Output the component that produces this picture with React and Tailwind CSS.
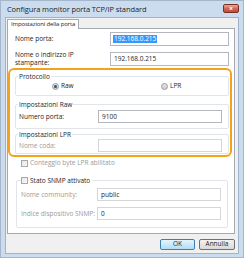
import React from "react";

function Field({ value, selected, muted, className = "" }) {
  return (
    <div
      className={`h-[13px] bg-white border flex items-center px-[2px] text-[6.5px] ${
        muted ? "border-[#d4d6da]" : "border-[#b4b7bd]"
      } ${className}`}
    >
      {value && (
        <span
          className={
            selected
              ? "bg-[#3399ff] text-white leading-[8px] px-[1px]"
              : "text-[#1e1e1e] leading-[8px] px-[1px]"
          }
        >
          {value}
        </span>
      )}
    </div>
  );
}

function Radio({ checked }) {
  return (
    <span className="w-[7px] h-[7px] rounded-full border border-[#9a9a9a] bg-gradient-to-b from-[#e4e4e4] to-[#cfcfcf] flex items-center justify-center">
      {checked && (
        <span className="w-[3px] h-[3px] rounded-full bg-[#24527d]" />
      )}
    </span>
  );
}

function Check() {
  return (
    <span className="w-[7px] h-[7px] border border-[#a9a9a9] bg-gradient-to-br from-[#e6e6e6] to-[#fafafa]" />
  );
}

export default function App() {
  return (
    <div className="w-[244px] h-[258px] bg-[#cbdcee] flex flex-col font-['Open_Sans','Noto_Sans',sans-serif] text-[#1e1e1e] border border-[#a3b6cc]">
      {/* Title bar */}
      <div className="h-[16px] flex items-start justify-between pl-[6px] pr-[4px]">
        <span className="text-[7.5px] leading-[9px] mt-[4px] tracking-[-0.1px]">
          Configura monitor porta TCP/IP standard
        </span>
        <div className="mt-[3px] w-[16px] h-[9px] rounded-[2px] border border-[#7a2f25] bg-gradient-to-b from-[#e9a89a] via-[#d26a55] to-[#c24a34] flex items-center justify-center text-white text-[7px] leading-none font-bold">
          ×
        </div>
      </div>

      {/* Client area */}
      <div className="flex-1 mx-[4px] mb-[3px] bg-[#f0f0f0] border border-[#9fb4cc] flex flex-col">
        {/* Tab */}
        <div className="self-start mt-[1px] ml-[1px] h-[10px] bg-white border border-b-0 border-[#a5a9b0] -mb-[1px] relative z-10 flex items-center px-[3px] text-[6px] tracking-[-0.15px] whitespace-nowrap">
          Impostazioni della porta
        </div>

        {/* Panel */}
        <div className="ml-[1px] mr-[3px] h-[206px] bg-white border border-[#a5a9b0] flex flex-col text-[6.5px]">
          <div className="mt-[3px] h-[14px] flex items-center justify-between pl-[7px] pr-[5px]">
            <span>Nome porta:</span>
            <Field value="192.168.0.215" selected className="w-[119px] h-[14px]" />
          </div>
          <div className="mt-[5px] h-[16px] flex items-center justify-between pl-[7px] pr-[5px]">
            <span className="leading-[8px]">
              Nome o indirizzo IP
              <br />
              stampante:
            </span>
            <Field value="192.168.0.215" className="w-[119px] h-[14px]" />
          </div>

          {/* Highlighted block */}
          <div className="mt-[1px] mr-[2px] h-[89px] border-2 border-[#f2a31c] rounded-[6px] flex flex-col">
            <fieldset className="mt-[2px] ml-[5px] mr-[1px] border border-[#e1e4e8] rounded-[2px] pb-[4px]">
              <legend className="ml-[2px] px-[1px] leading-[9px]">Protocollo</legend>
              <div className="h-[10px] flex items-center">
                <div className="w-[145px] pl-[36px] flex items-center gap-[2px]">
                  <Radio checked />
                  <span>Raw</span>
                </div>
                <div className="flex items-center gap-[2px]">
                  <Radio />
                  <span>LPR</span>
                </div>
              </div>
            </fieldset>

            <fieldset className="mt-[4px] ml-[5px] mr-[1px] border border-[#e1e4e8] rounded-[2px] pb-[5px]">
              <legend className="ml-[2px] px-[1px] leading-[9px]">Impostazioni Raw</legend>
              <div className="mt-[1px] flex items-center justify-between pl-[3px] pr-[6px]">
                <span>Numero porta:</span>
                <Field value="9100" className="w-[124px]" />
              </div>
            </fieldset>

            <fieldset className="mt-[1px] ml-[5px] mr-[1px] border border-[#e1e4e8] rounded-[2px] pb-[1px]">
              <legend className="ml-[2px] px-[1px] leading-[9px]">Impostazioni LPR</legend>
              <div className="flex items-center justify-between pl-[3px] pr-[6px]">
                <span className="text-[#9a9a9a]">Nome coda:</span>
                <Field muted className="w-[124px]" />
              </div>
            </fieldset>
          </div>

          <div className="mt-[1px] h-[10px] flex items-center gap-[2px] pl-[13px] text-[#9a9a9a]">
            <Check />
            <span>Conteggio byte LPR abilitato</span>
          </div>

          <fieldset className="mt-[8px] ml-[8px] mr-[6px] border border-[#e1e4e8] rounded-[2px] pb-[7px]">
            <legend className="ml-[4px] pr-[2px] leading-[9px] flex items-center gap-[2px]">
              <Check />
              <span>Stato SNMP attivato</span>
            </legend>
            <div className="mt-[3px] flex items-center justify-between pl-[4px] pr-[6px]">
              <span className="text-[#9a9a9a]">Nome community:</span>
              <Field value="public" muted className="w-[124px]" />
            </div>
            <div className="mt-[6px] flex items-center justify-between pl-[4px] pr-[6px]">
              <span className="text-[#9a9a9a]">Indice dispositivo SNMP:</span>
              <Field value="0" muted className="w-[124px]" />
            </div>
          </fieldset>
        </div>

        {/* Buttons */}
        <div className="mt-[5px] flex justify-end gap-[4px] pr-[3px] text-[6.5px]">
          <button className="w-[35px] h-[11px] rounded-[2px] border border-[#3c7fb1] bg-gradient-to-b from-[#e5f4fc] to-[#b2dcf4] leading-none">
            OK
          </button>
          <button className="w-[36px] h-[11px] rounded-[2px] border border-[#707070] bg-gradient-to-b from-[#f2f2f2] to-[#d9d9d9] leading-none">
            Annulla
          </button>
        </div>
      </div>
    </div>
  );
}
